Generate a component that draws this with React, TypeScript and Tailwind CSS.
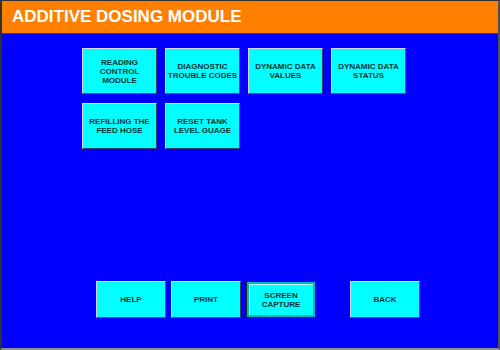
import React from 'react';

const topButtons = [
  ['READING', 'CONTROL', 'MODULE'],
  ['DIAGNOSTIC', 'TROUBLE CODES'],
  ['DYNAMIC DATA', 'VALUES'],
  ['DYNAMIC DATA', 'STATUS'],
  ['REFILLING THE', 'FEED HOSE'],
  ['RESET TANK', 'LEVEL GUAGE'],
];

function PanelButton({ lines, pressed, className }: { lines: string[]; pressed?: boolean; className: string }) {
  const edge = pressed
    ? 'border-[1.5px] border-[#202020] shadow-[inset_2px_2px_0_#00b8b8,inset_-2px_-2px_0_#00b8b8,inset_3px_3px_0_#c0ffff]'
    : 'border-[1.5px] border-t-[#d8d8ff] border-l-[#d8d8ff] border-b-[#404060] border-r-[#404060]';
  return (
    <button
      className={`${className} ${edge} bg-[#00ffff] flex flex-col items-center justify-center whitespace-nowrap text-[8px] leading-[9px] font-bold text-[#0a3434]`}
    >
      {lines.map((l, i) => (
        <span key={i}>{l}</span>
      ))}
    </button>
  );
}

export default function App() {
  return (
    <div className="w-[500px] h-[350px] flex flex-col border-l-2 border-t border-r-2 border-b-2 border-l-[#303030] border-t-[#303030] border-r-[#505050] border-b-[#909090] bg-[#0000ff] font-['Liberation_Sans',Arial,sans-serif]">
      <div className="h-[33px] bg-[#ff8000] border-b border-[#404040] flex items-center pl-[10px] shrink-0">
        <span className="text-white font-bold text-[17px]">ADDITIVE DOSING MODULE</span>
      </div>
      <div className="flex-1 flex flex-col pl-[80px] pt-[14px] pb-[30px]">
        <div className="grid grid-cols-[repeat(4,75px)] gap-x-[8px] gap-y-[9px]">
          {topButtons.map((b, i) => (
            <PanelButton key={i} lines={b} className="h-[46px]" />
          ))}
        </div>
        <div className="mt-auto flex pl-[14px] gap-[5px]">
          <PanelButton lines={['HELP']} className="w-[70px] h-[37px]" />
          <PanelButton lines={['PRINT']} className="w-[70px] h-[37px]" />
          <PanelButton lines={['SCREEN', 'CAPTURE']} pressed className="w-[70px] h-[37px]" />
          <PanelButton lines={['BACK']} className="w-[70px] h-[37px] ml-[29px]" />
        </div>
      </div>
    </div>
  );
}
